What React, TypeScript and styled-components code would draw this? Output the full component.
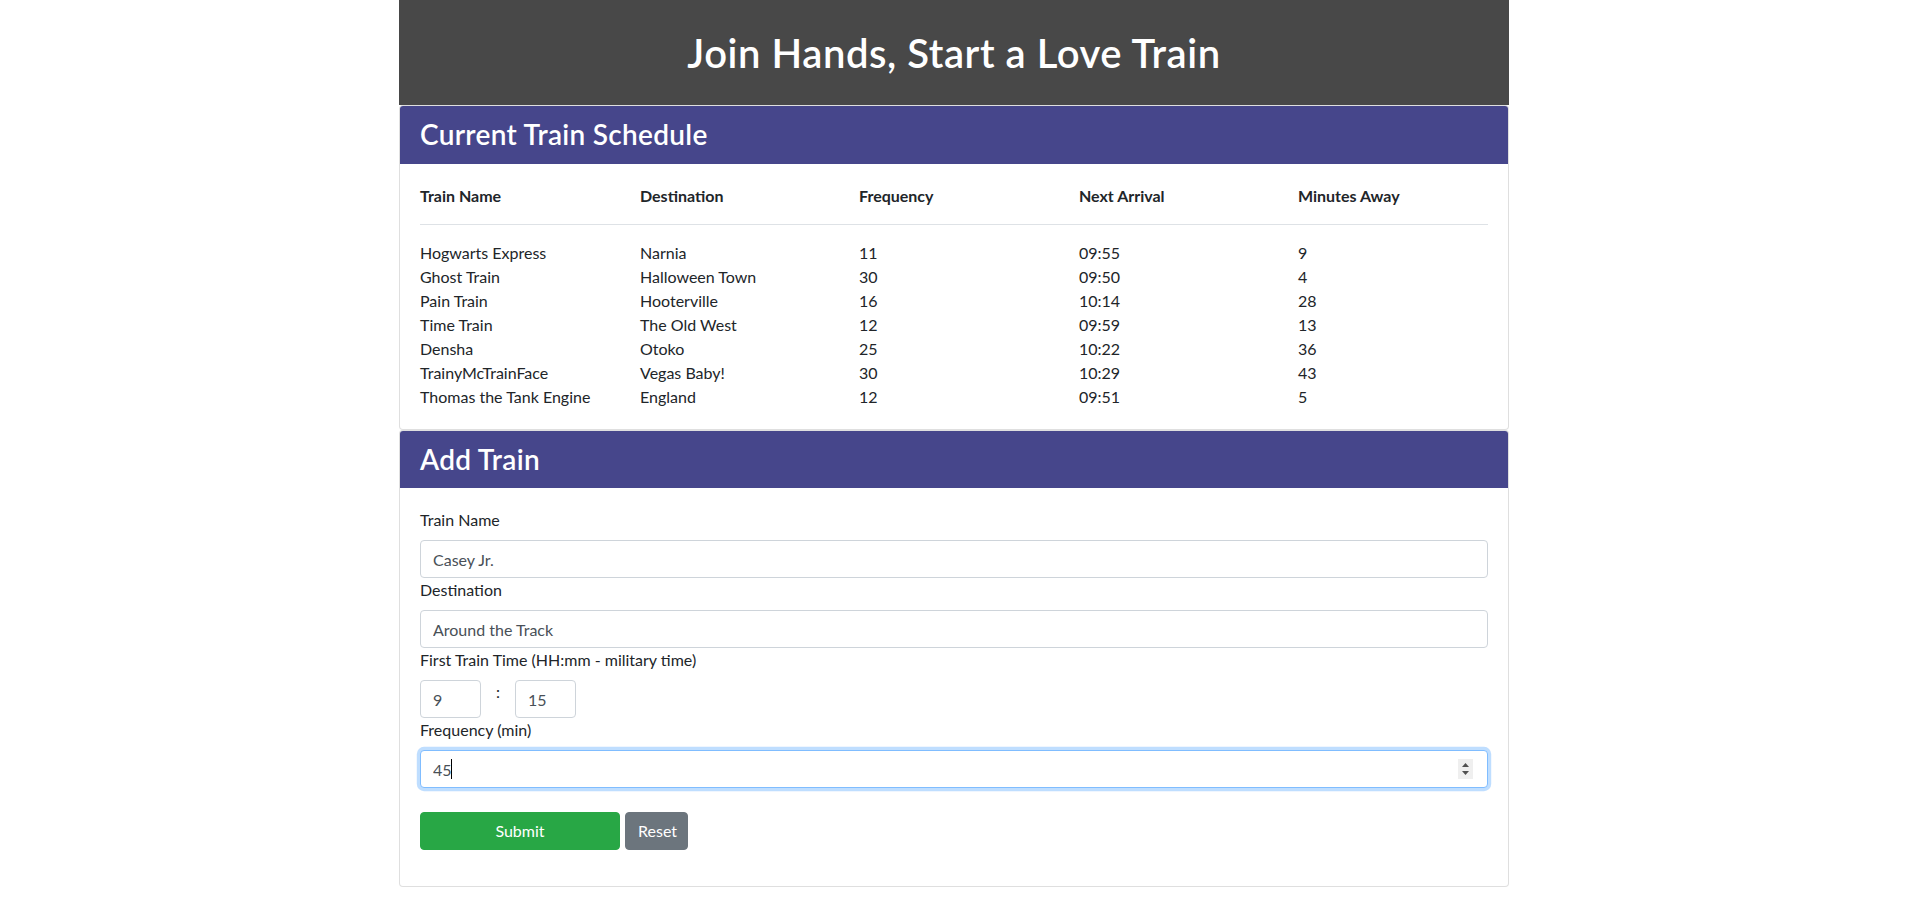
import React from "react";
import styled, { createGlobalStyle } from "styled-components";

const Global = createGlobalStyle`
  * { box-sizing: border-box; }
  body {
    margin: 0;
    font-family: "Lato", "Open Sans", sans-serif;
    font-size: 16px;
    line-height: 1.5;
    color: #212529;
    background: #fff;
  }
`;

const Container = styled.div`
  width: 1110px;
  margin: 0 auto;
`;

const Banner = styled.header`
  height: 105px;
  background: #484848;
  display: flex;
  align-items: center;
  justify-content: center;
`;

const Title = styled.h1`
  margin: 0;
  color: #fff;
  font-size: 40px;
  font-weight: 600;
  line-height: 1.2;
  letter-spacing: 0.55px;
`;

const Card = styled.section`
  border: 1px solid rgba(0, 0, 0, 0.125);
  border-radius: 4px;
  background: #fff;
`;

const CardHeader = styled.div`
  background: #46468b;
  color: #fff;
  padding: 12px 20px;
  border-radius: 3px 3px 0 0;
`;

const CardTitle = styled.h3`
  margin: 0;
  font-size: 28px;
  font-weight: 600;
  line-height: 1.2;
  letter-spacing: 0.3px;
`;

const CardBody = styled.div`
  padding: 20px;
`;

const Table = styled.table`
  width: 100%;
  border-collapse: collapse;
  table-layout: fixed;
`;

const Th = styled.th<{ $w?: number }>`
  text-align: left;
  font-weight: 700;
  padding: 0 0 16px 0;
  border-bottom: 1px solid #dee2e6;
  width: ${(p) => (p.$w ? `${p.$w}px` : "auto")};
`;

const Tr = styled.tr`
  &:first-child td { padding-top: 16px; }
`;

const Td = styled.td`
  padding: 0;
  line-height: 24px;
`;

const Form = styled.form`
  margin-bottom: 16px;
`;

const Label = styled.label`
  display: block;
  margin-bottom: 8px;
`;

const Input = styled.input<{ $focus?: boolean }>`
  display: block;
  width: 100%;
  height: 38px;
  padding: 6px 12px;
  font-family: inherit;
  font-size: 16px;
  line-height: 1.5;
  color: #495057;
  background: #fff;
  border: 1px solid ${(p) => (p.$focus ? "#80bdff" : "#ced4da")};
  border-radius: 4px;
  box-shadow: ${(p) => (p.$focus ? "0 0 0 3.2px rgba(0,123,255,.25)" : "none")};
  outline: none;
`;

const TimeRow = styled.div`
  display: flex;
  align-items: flex-start;
`;

const TimeInput = styled(Input)`
  width: 61px;
`;

const Colon = styled.span`
  margin: 0 15px 0 15px;
  line-height: 24px;
`;

const FieldWrap = styled.div`
  position: relative;
`;

const Caret = styled.span`
  position: absolute;
  left: 31px;
  top: 9px;
  width: 1px;
  height: 20px;
  background: #000;
`;

const Spinner = styled.span`
  position: absolute;
  right: 15px;
  top: 9px;
  width: 15px;
  height: 20px;
  background: #efefef;
  display: flex;
  align-items: center;
  justify-content: center;
`;

const Buttons = styled.div`
  display: flex;
  gap: 5px;
  margin-top: 24px;
`;

const Button = styled.button<{ $bg: string; $w: number }>`
  width: ${(p) => p.$w}px;
  height: 38px;
  padding: 6px 12px;
  border: 1px solid ${(p) => p.$bg};
  border-radius: 4px;
  background: ${(p) => p.$bg};
  color: #fff;
  font-family: inherit;
  font-size: 16px;
  line-height: 1.5;
  text-align: center;
`;

const trains = [
  ["Hogwarts Express", "Narnia", "11", "09:55", "9"],
  ["Ghost Train", "Halloween Town", "30", "09:50", "4"],
  ["Pain Train", "Hooterville", "16", "10:14", "28"],
  ["Time Train", "The Old West", "12", "09:59", "13"],
  ["Densha", "Otoko", "25", "10:22", "36"],
  ["TrainyMcTrainFace", "Vegas Baby!", "30", "10:29", "43"],
  ["Thomas the Tank Engine", "England", "12", "09:51", "5"],
];

export default function App() {
  return (
    <>
      <Global />
      <Container>
        <Banner>
          <Title>Join Hands, Start a Love Train</Title>
        </Banner>
        <Card>
          <CardHeader>
            <CardTitle>Current Train Schedule</CardTitle>
          </CardHeader>
          <CardBody>
            <Table>
              <thead>
                <tr>
                  <Th $w={220}>Train Name</Th>
                  <Th $w={219}>Destination</Th>
                  <Th $w={220}>Frequency</Th>
                  <Th $w={219}>Next Arrival</Th>
                  <Th>Minutes Away</Th>
                </tr>
              </thead>
              <tbody>
                {trains.map((t) => (
                  <Tr key={t[0]}>
                    {t.map((c, i) => (
                      <Td key={i}>{c}</Td>
                    ))}
                  </Tr>
                ))}
              </tbody>
            </Table>
          </CardBody>
        </Card>
        <Card>
          <CardHeader>
            <CardTitle>Add Train</CardTitle>
          </CardHeader>
          <CardBody>
            <Form onSubmit={(e) => e.preventDefault()}>
              <Label htmlFor="name">Train Name</Label>
              <Input id="name" defaultValue="Casey Jr." />
              <Label htmlFor="dest">Destination</Label>
              <Input id="dest" defaultValue="Around the Track" />
              <Label>First Train Time (HH:mm - military time)</Label>
              <TimeRow>
                <TimeInput defaultValue="9" />
                <Colon>:</Colon>
                <TimeInput defaultValue="15" />
              </TimeRow>
              <Label htmlFor="freq">Frequency (min)</Label>
              <FieldWrap>
                <Input id="freq" $focus defaultValue="45" />
                <Caret />
                <Spinner>
                  <svg width="9" height="14" viewBox="0 0 9 14">
                    <path d="M4.5 1 L8 5 L1 5 Z" fill="#505050" />
                    <path d="M4.5 13 L8 9 L1 9 Z" fill="#505050" />
                  </svg>
                </Spinner>
              </FieldWrap>
              <Buttons>
                <Button type="submit" $bg="#28a745" $w={200}>Submit</Button>
                <Button type="reset" $bg="#6c757d" $w={63}>Reset</Button>
              </Buttons>
            </Form>
          </CardBody>
        </Card>
      </Container>
    </>
  );
}
